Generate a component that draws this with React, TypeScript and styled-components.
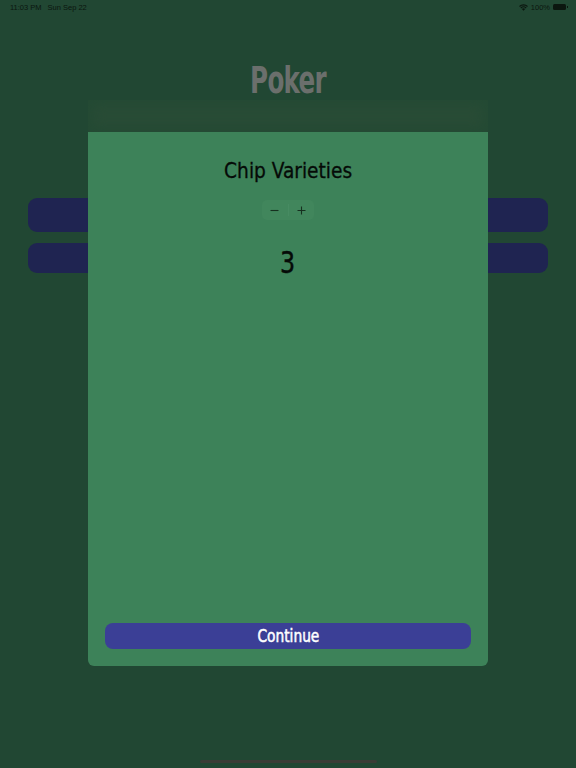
import * as React from 'react';
import styled, { createGlobalStyle } from 'styled-components';

const GlobalStyle = createGlobalStyle`
  html, body {
    margin: 0;
    padding: 0;
    background: #214733;
  }
  #root {
    min-height: 768px;
  }
`;

const din = `"DejaVu Sans Condensed", "Liberation Sans Narrow", "Liberation Sans", sans-serif`;

const Screen = styled.div`
  position: relative;
  width: 576px;
  height: 768px;
  overflow: hidden;
  background: #214733;
  font-family: ${din};
`;

const StatusBar = styled.div`
  display: flex;
  justify-content: space-between;
  align-items: center;
  height: 14px;
  padding: 0 10px;
  font-family: "Liberation Sans", Arial, sans-serif;
  font-size: 7.5px;
  color: #0b160f;
`;

const StatusGroup = styled.div<{ $gap: number }>`
  display: flex;
  align-items: center;
  gap: ${p => p.$gap}px;
`;

const Battery = styled.div`
  width: 13px;
  height: 6px;
  border-radius: 1.5px;
  background: #0b160f;
  position: relative;
  &:after {
    content: '';
    position: absolute;
    right: -2px;
    top: 2px;
    width: 1px;
    height: 2px;
    background: #0b160f;
  }
`;

const Title = styled.h1`
  margin: 44px 0 0;
  text-align: center;
  font-family: ${din};
  font-weight: bold;
  font-size: 38px;
  letter-spacing: -1px;
  color: #6b6f6c;
  transform: scaleX(0.72);
`;

const MenuList = styled.div`
  display: flex;
  flex-direction: column;
  gap: 11px;
  padding: 0 28px;
  margin-top: 96px;
`;

const MenuButton = styled.div<{ $h: number }>`
  height: ${p => p.$h}px;
  border-radius: 9px;
  background: #1f2451;
`;

const Overlay = styled.div`
  position: absolute;
  left: 88px;
  top: 100px;
  width: 400px;
  display: flex;
  flex-direction: column;
`;

const BackSheet = styled.div`
  height: 32px;
  background: #294c36;
  box-shadow: inset 0 0 12px 6px #244a34;
`;

const Sheet = styled.div`
  height: 534px;
  background: #3d8259;
  border-radius: 0 0 6px 6px;
  display: flex;
  flex-direction: column;
  align-items: center;
  padding: 26px 17px 17px;
  box-sizing: border-box;
`;

const SheetTitle = styled.h2`
  margin: 0;
  font-family: ${din};
  font-weight: normal;
  font-size: 22px;
  color: #050a07;
  transform: scaleX(0.94);
  -webkit-text-stroke: 0.3px #050a07;
`;

const Stepper = styled.div`
  margin-top: 17px;
  display: flex;
  align-items: center;
  width: 52px;
  height: 20px;
  border-radius: 5px;
  background: #41865c;
`;

const StepButton = styled.div`
  flex: 1;
  display: flex;
  align-items: center;
  justify-content: center;
  color: #16301f;
`;

const StepDivider = styled.div`
  width: 1px;
  height: 12px;
  background: #478b62;
`;

const Count = styled.div`
  margin-top: 25px;
  font-family: ${din};
  font-size: 30px;
  color: #050a07;
  transform: scaleX(0.88);
  -webkit-text-stroke: 0.4px #050a07;
`;

const Spacer = styled.div`
  flex: 1;
`;

const ContinueButton = styled.button`
  width: 100%;
  height: 26px;
  border: none;
  border-radius: 8px;
  background: #3b3f96;
  padding: 0;
  cursor: pointer;
`;

const ContinueLabel = styled.span`
  display: inline-block;
  color: #ffffff;
  font-family: ${din};
  font-size: 17px;
  font-weight: normal;
  -webkit-text-stroke: 0.5px #ffffff;
  transform: scaleX(0.9);
`;

const HomeIndicator = styled.div`
  position: absolute;
  left: 200px;
  bottom: 5px;
  width: 177px;
  height: 3px;
  border-radius: 2px;
  background: #3a3d36;
`;

const Wifi = () => (
  <svg width="9" height="7" viewBox="0 0 18 14">
    <path d="M9 13.5 L5.8 10.2 A4.6 4.6 0 0 1 12.2 10.2 Z" fill="#0b160f" />
    <path d="M3.6 8 A7.8 7.8 0 0 1 14.4 8" stroke="#0b160f" strokeWidth="2.2" fill="none" />
    <path d="M1 5 A11.5 11.5 0 0 1 17 5" stroke="#0b160f" strokeWidth="2.2" fill="none" />
  </svg>
);

export default function App() {
  const [count, setCount] = React.useState(3);
  return (
    <Screen>
      <GlobalStyle />
      <StatusBar>
        <StatusGroup $gap={6}>
          <span>11:03 PM</span>
          <span>Sun Sep 22</span>
        </StatusGroup>
        <StatusGroup $gap={3}>
          <Wifi />
          <span>100%</span>
          <Battery />
        </StatusGroup>
      </StatusBar>
      <Title>Poker</Title>
      <MenuList>
        <MenuButton $h={34} />
        <MenuButton $h={30} />
      </MenuList>
      <Overlay>
        <BackSheet />
        <Sheet>
          <SheetTitle>Chip Varieties</SheetTitle>
          <Stepper>
            <StepButton onClick={() => setCount(c => Math.max(0, c - 1))}>
              <svg width="9" height="9" viewBox="0 0 9 9">
                <path d="M0.5 4.5 H8.5" stroke="currentColor" strokeWidth="1.1" />
              </svg>
            </StepButton>
            <StepDivider />
            <StepButton onClick={() => setCount(c => c + 1)}>
              <svg width="9" height="9" viewBox="0 0 9 9">
                <path d="M0.5 4.5 H8.5 M4.5 0.5 V8.5" stroke="currentColor" strokeWidth="1.1" />
              </svg>
            </StepButton>
          </Stepper>
          <Count>{count}</Count>
          <Spacer />
          <ContinueButton>
            <ContinueLabel>Continue</ContinueLabel>
          </ContinueButton>
        </Sheet>
      </Overlay>
      <HomeIndicator />
    </Screen>
  );
}
